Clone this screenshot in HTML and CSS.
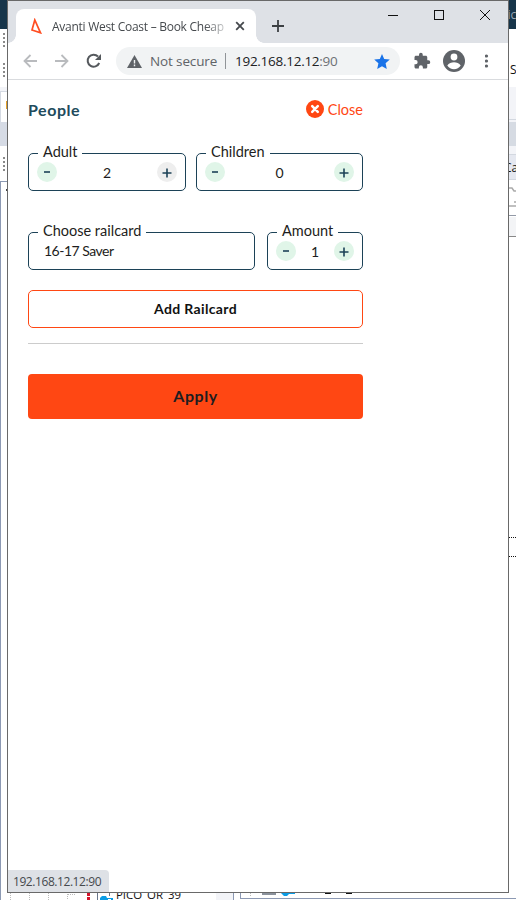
FILE: index.html
```
<!DOCTYPE html>
<html lang="en">
<head>
<meta charset="utf-8">
<title>Avanti West Coast – Book Cheap</title>
<link rel="stylesheet" href="styles.css">
</head>
<body>
<div class="desktop">
  <svg class="edge-left" width="7" height="893" shape-rendering="crispEdges">
    <rect width="7" height="29" fill="#17354a"/>
    <path d="M4 33v15M4 63v15M4 157v15" stroke="#8a8a8a" stroke-width="2" stroke-dasharray="2 2"/>
    <path d="M0 87h7v4h-7z" fill="#f3f4f8"/>
    <path d="M0 91.500h7M0.500 91v31" stroke="#d5dae3" fill="none"/>
    <path d="M6 101h1v8h-1z" fill="#e5a22a"/>
    <path d="M0 122h7v24h-7z" fill="#d6dbe5"/>
    <path d="M0 181.500h7M0.500 181v712" stroke="#8c99b3" fill="none"/>
    <path d="M6 189h1v2h-1z" fill="#444"/>
  </svg>
  <main class="window">
    <header class="tabbar">
      <div class="tab">
        <svg class="favicon" width="12" height="16" viewBox="0 0 12 16"><path d="M4.800 2L2 12l8.500 2.800z" fill="none" stroke="#ff4e22" stroke-width="1.700"/></svg>
        <span class="tab-title">Avanti West Coast – Book Cheap</span>
        <svg width="10" height="10" viewBox="0 0 10 10"><path d="M1.200 1.200l7.600 7.600M8.800 1.200l-7.600 7.600" stroke="#45494d" stroke-width="1.800"/></svg>
      </div>
      <svg class="newtab" width="12" height="12" viewBox="0 0 12 12"><path d="M6 0v12M0 6h12" stroke="#3c4043" stroke-width="1.800"/></svg>
      <svg class="controls" width="104" height="12" viewBox="0 0 104 12"><g fill="none" stroke="#111"><path d="M0 6.500h10M46.500 1.500h9v9h-9z" shape-rendering="crispEdges"/><path d="M92 1l10 10M102 1l-10 10"/></g></svg>
    </header>
    <nav class="toolbar">
      <svg width="14" height="14" viewBox="0 0 14 14"><path d="M14 7H1.500M7.500 1l-6 6 6 6" fill="none" stroke="#b9bbbe" stroke-width="1.800"/></svg>
      <svg class="forward" width="14" height="14" viewBox="0 0 14 14"><path d="M0 7h12.500M6.500 1l6 6-6 6" fill="none" stroke="#b9bbbe" stroke-width="1.800"/></svg>
      <svg class="reload" width="16" height="16" viewBox="0 0 16 16"><path d="M13.200 10A6 6 0 1 1 12 3.500" fill="none" stroke="#55595d" stroke-width="2"/><path d="M15 1v6H9z" fill="#55595d"/></svg>
      <div class="address">
        <svg width="15" height="13" viewBox="0 0 15 13"><path d="M7.500 0L15 13H0z" fill="#5f6368"/><path d="M7.500 5v3.500M7.500 9.500v1.700" stroke="#f1f3f4" stroke-width="1.400"/></svg>
        <span class="secure">Not secure</span>
        <span class="bar"></span>
        <span class="url">192.168.12.12<i>:90</i></span>
        <svg class="star" width="16" height="15" viewBox="0 0 16 15"><path d="M8 0l2.200 5 5.600.6-4.200 3.700 1.200 5.700L8 12.200 3.200 15l1.200-5.700L.2 5.600 5.800 5z" fill="#1a73e8"/></svg>
      </div>
      <svg class="puzzle" width="18" height="18" viewBox="0 0 24 24"><path fill="#5f6368" d="M20.500 11H19V7c0-1.100-.9-2-2-2h-4V3.500a2.500 2.500 0 0 0-5 0V5H4c-1.100 0-2 .9-2 2v3.800h1.500a2.700 2.700 0 0 1 0 5.400H2V20c0 1.100.9 2 2 2h3.800v-1.500a2.700 2.700 0 0 1 5.400 0V22H17c1.100 0 2-.9 2-2v-4h1.500a2.500 2.500 0 0 0 0-5z"/></svg>
      <svg class="avatar" width="22" height="22" viewBox="0 0 22 22"><circle cx="11" cy="11" r="11" fill="#5f6368"/><circle cx="11" cy="7" r="3.400" fill="#fff"/><path d="M4.300 15.500c1.400-2.400 4.200-3.200 6.700-3.200s5.300.8 6.700 3.200a8 8 0 0 1-13.400 0z" fill="#fff"/></svg>
      <svg class="dots" width="4" height="14" viewBox="0 0 4 14"><g fill="#5f6368"><circle cx="1.500" cy="2" r="1.600"/><circle cx="1.500" cy="7" r="1.600"/><circle cx="1.500" cy="12" r="1.600"/></g></svg>
    </nav>
    <section class="panel">
      <div class="panel-head">
        <h1>People</h1>
        <a class="close"><svg width="18" height="18" viewBox="0 0 18 18"><circle cx="9" cy="9" r="9" fill="#ff4713"/><path d="M6.200 6.200l5.600 5.600M11.800 6.200l-5.600 5.600" stroke="#fff" stroke-width="2.500" stroke-linecap="round"/></svg><span>Close</span></a>
      </div>
      <div class="row">
        <fieldset class="adult"><legend>Adult</legend><div class="stepper"><button><svg width="20" height="20"><path d="M7 10h6"/></svg></button><b>2</b><button class="off"><svg width="20" height="20"><path d="M5.500 11h9M10 6.500v9"/></svg></button></div></fieldset>
        <fieldset class="children"><legend>Children</legend><div class="stepper"><button><svg width="20" height="20"><path d="M7 10h6"/></svg></button><b>0</b><button><svg width="20" height="20"><path d="M5.500 11h9M10 6.500v9"/></svg></button></div></fieldset>
      </div>
      <div class="row second">
        <fieldset class="railcard"><legend>Choose railcard</legend><div class="value">16-17 Saver</div></fieldset>
        <fieldset class="amount"><legend>Amount</legend><div class="stepper"><button><svg width="20" height="20"><path d="M7 10h6"/></svg></button><b>1</b><button><svg width="20" height="20"><path d="M5.500 11h9M10 6.500v9"/></svg></button></div></fieldset>
      </div>
      <button class="add">Add Railcard</button>
      <hr>
      <button class="apply">Apply</button>
    </section>
    <footer class="status"><span>192.168.12.12:90</span></footer>
  </main>
  <svg class="edge-right" width="7" height="893">
    <g shape-rendering="crispEdges">
      <path d="M0 0h7v29h-7z" fill="#17354a"/>
      <path d="M0 87h7v67h-7z" fill="#f3f4f8"/>
      <path d="M0 119.500h7M0 154.500h7M0 179.500h7" stroke="#d3d8e0"/>
      <path d="M0 122h7v24h-7z" fill="#d6dbe3"/>
      <path d="M0 155h7v24h-7z" fill="#e5e8f0"/>
      <path d="M0 217h7v19h-7z" fill="#f3f4f6"/>
      <path d="M0 215.500h7" stroke="#9299a6"/><path d="M0 236.500h7" stroke="#888"/>
      <path d="M0 537.500h7M0 556.500h7" stroke="#111" stroke-dasharray="1 1"/>
    </g>
    <path d="M0 188h3l2 3h2M0 206h7M5 202h2" fill="none" stroke="#aaa" stroke-width="1.500"/>
    <text x="-1.500" y="19" fill="#9aa8b4">ic</text><text x="1" y="74" fill="#111">S</text><text x="-5" y="172" fill="#111">Ca</text>
  </svg>
  <svg class="edge-bottom" width="516" height="7">
    <g shape-rendering="crispEdges">
      <path d="M216 0h17v7h-17z" fill="#f3f4f8"/>
      <path d="M.5 0v7M233.500 0v7M240.500 0v5.500H516" fill="none" stroke="#8c99b3"/>
      <path d="M10.500 0v7M29.500 0v7M48.500 0v7M67.500 1v6M68 1.500h8M250.500 0v4" stroke="#bbb" stroke-dasharray="1 1"/>
      <path d="M87 0h3v3h-3zM87 4h3v3h-3z" fill="#d4152c"/>
      <path d="M97.500 7V0M109.500 0v3" stroke="#68758b"/>
      <path d="M262 0h14v1.500h-14z" fill="#8b929c"/><path d="M325 0h6v1h-6zM346 0h6v1h-6z" fill="#111"/>
    </g>
    <path d="M100 7V5l2-2h4l1 2h6v2h-2V6h-3v1zM281 0h14v1h-6l-2 2h-3z" fill="#0b9ce5"/>
    <text x="116" y="6" textLength="65" lengthAdjust="spacingAndGlyphs" fill="#111">PICO_OR_39</text>
  </svg>
</div>
</body>
</html>
```
FILE: styles.css
```
* { box-sizing: border-box; }
body { margin: 0; background: #fff; overflow: hidden; font-family: "Open Sans", sans-serif; }
svg { display: block; flex: none; }
button { font: inherit; padding: 0; }
.desktop { display: grid; grid-template-columns: 7px 502px 7px; grid-template-rows: 893px 7px; width: 516px; height: 900px; }
.edge-bottom { grid-column: 1 / -1; }
.edge-right text { font-size: 12px; }
.edge-bottom text { font-size: 11px; }
.window { display: flex; flex-direction: column; border: 1px solid #696969; background: #fff; }

.tabbar { height: 42px; flex: none; display: flex; align-items: flex-end; background: #dee1e6; }
.tab { position: relative; width: 240px; height: 34px; margin-left: 8px; padding: 0 11px 0 14px; display: flex; align-items: center; background: #fff; border-radius: 8px 8px 0 0; }
.tab::before, .tab::after { content: ""; position: absolute; bottom: 0; width: 8px; height: 8px; }
.tab::before { left: -8px; background: radial-gradient(circle at 0 0, #dee1e6 7.5px, #fff 8px); }
.tab::after { right: -8px; background: radial-gradient(circle at 100% 0, #dee1e6 7.5px, #fff 8px); }
.tab-title { width: 173px; margin: 0 10px 0 10px; overflow: hidden; white-space: nowrap; font-size: 12px; letter-spacing: -.27px; color: #45494d; -webkit-mask-image: linear-gradient(90deg, #000 88%, rgba(0,0,0,.25)); mask-image: linear-gradient(90deg, #000 88%, rgba(0,0,0,.25)); }
.newtab { margin: 0 0 11px 16px; }
.controls { margin: 0 0 22px 104px; }

.toolbar { height: 37px; flex: none; display: flex; align-items: center; padding-left: 15px; border-bottom: 1px solid #d9dbde; }
.forward { margin-left: 18px; }
.reload { margin-left: 17px; }
.address { width: 284px; height: 28px; margin-left: 14px; padding: 0 10px 0 11px; display: flex; align-items: center; background: #f1f3f4; border-radius: 14px; font-size: 13.5px; color: #5f6368; white-space: nowrap; }
.secure { width: 67px; margin-left: 8px; letter-spacing: -.13px; }
.bar { width: 1px; height: 16px; margin: 0 9px 0 8px; background: #909498; }
.url { color: #202124; letter-spacing: -.27px; }
.url i { font-style: normal; color: #6d7175; }
.star { margin-left: auto; }
.puzzle { margin-left: 13px; }
.avatar { margin-left: 12px; }
.dots { margin-left: 20px; }

.panel { width: 335px; margin-left: 20px; font-family: Lato, sans-serif; font-size: 14px; color: #1d1d20; }
.panel-head { height: 20px; margin-top: 20px; display: flex; align-items: center; justify-content: space-between; }
h1 { margin: 0; font-size: 16px; line-height: 20px; letter-spacing: .55px; color: #214b5c; }
.close { display: flex; align-items: center; gap: 4px; color: #ff4713; font-size: 14.5px; height: 18px; margin-bottom: 2px; }
.row { display: flex; justify-content: space-between; margin-top: 24px; }
.second { margin-top: 32px; }
fieldset { height: 47px; min-width: 0; margin: 0; padding: 0 8px; border: 1px solid #1c4257; border-radius: 5px; }
legend { height: 19px; line-height: 16px; margin-left: 1px; padding: 0 5px; font-size: 14.5px; white-space: nowrap; }
.adult { width: 158px; }
.children { width: 167px; }
.railcard { width: 227px; }
.amount { width: 96px; }
.stepper { height: 20px; margin-top: -1px; display: flex; align-items: center; justify-content: space-between; }
.stepper b { font-weight: 400; font-size: 14px; }
.stepper button { width: 20px; height: 20px; border: 0; border-radius: 50%; background: #e0f5e8; }
.stepper .off { background: #eee; }
.stepper path { fill: none; stroke: #1c4257; stroke-width: 1.600; }
.value { height: 20px; margin-top: -1px; padding-left: 7px; line-height: 20px; letter-spacing: -.5px; }
.add { display: block; width: 335px; height: 38px; margin-top: 20px; padding-bottom: 2px; background: #fff; border: 1px solid #ff4713; border-radius: 5px; color: #111; font-weight: 700; letter-spacing: .35px; }
hr { height: 1px; margin: 15px 0 30px; border: 0; background: #ccc; }
.apply { display: block; width: 335px; height: 45px; padding-bottom: 2px; border: 0; border-radius: 4px; background: #ff4713; color: #1d1d20; font-weight: 700; font-size: 16px; letter-spacing: .55px; }

.status { margin-top: auto; }
.status span { display: block; width: 101px; height: 22px; padding-left: 5px; line-height: 23px; background: #dee1e6; border-radius: 0 4px 0 0; font-size: 12px; letter-spacing: -.43px; color: #45494d; white-space: nowrap; }
```
